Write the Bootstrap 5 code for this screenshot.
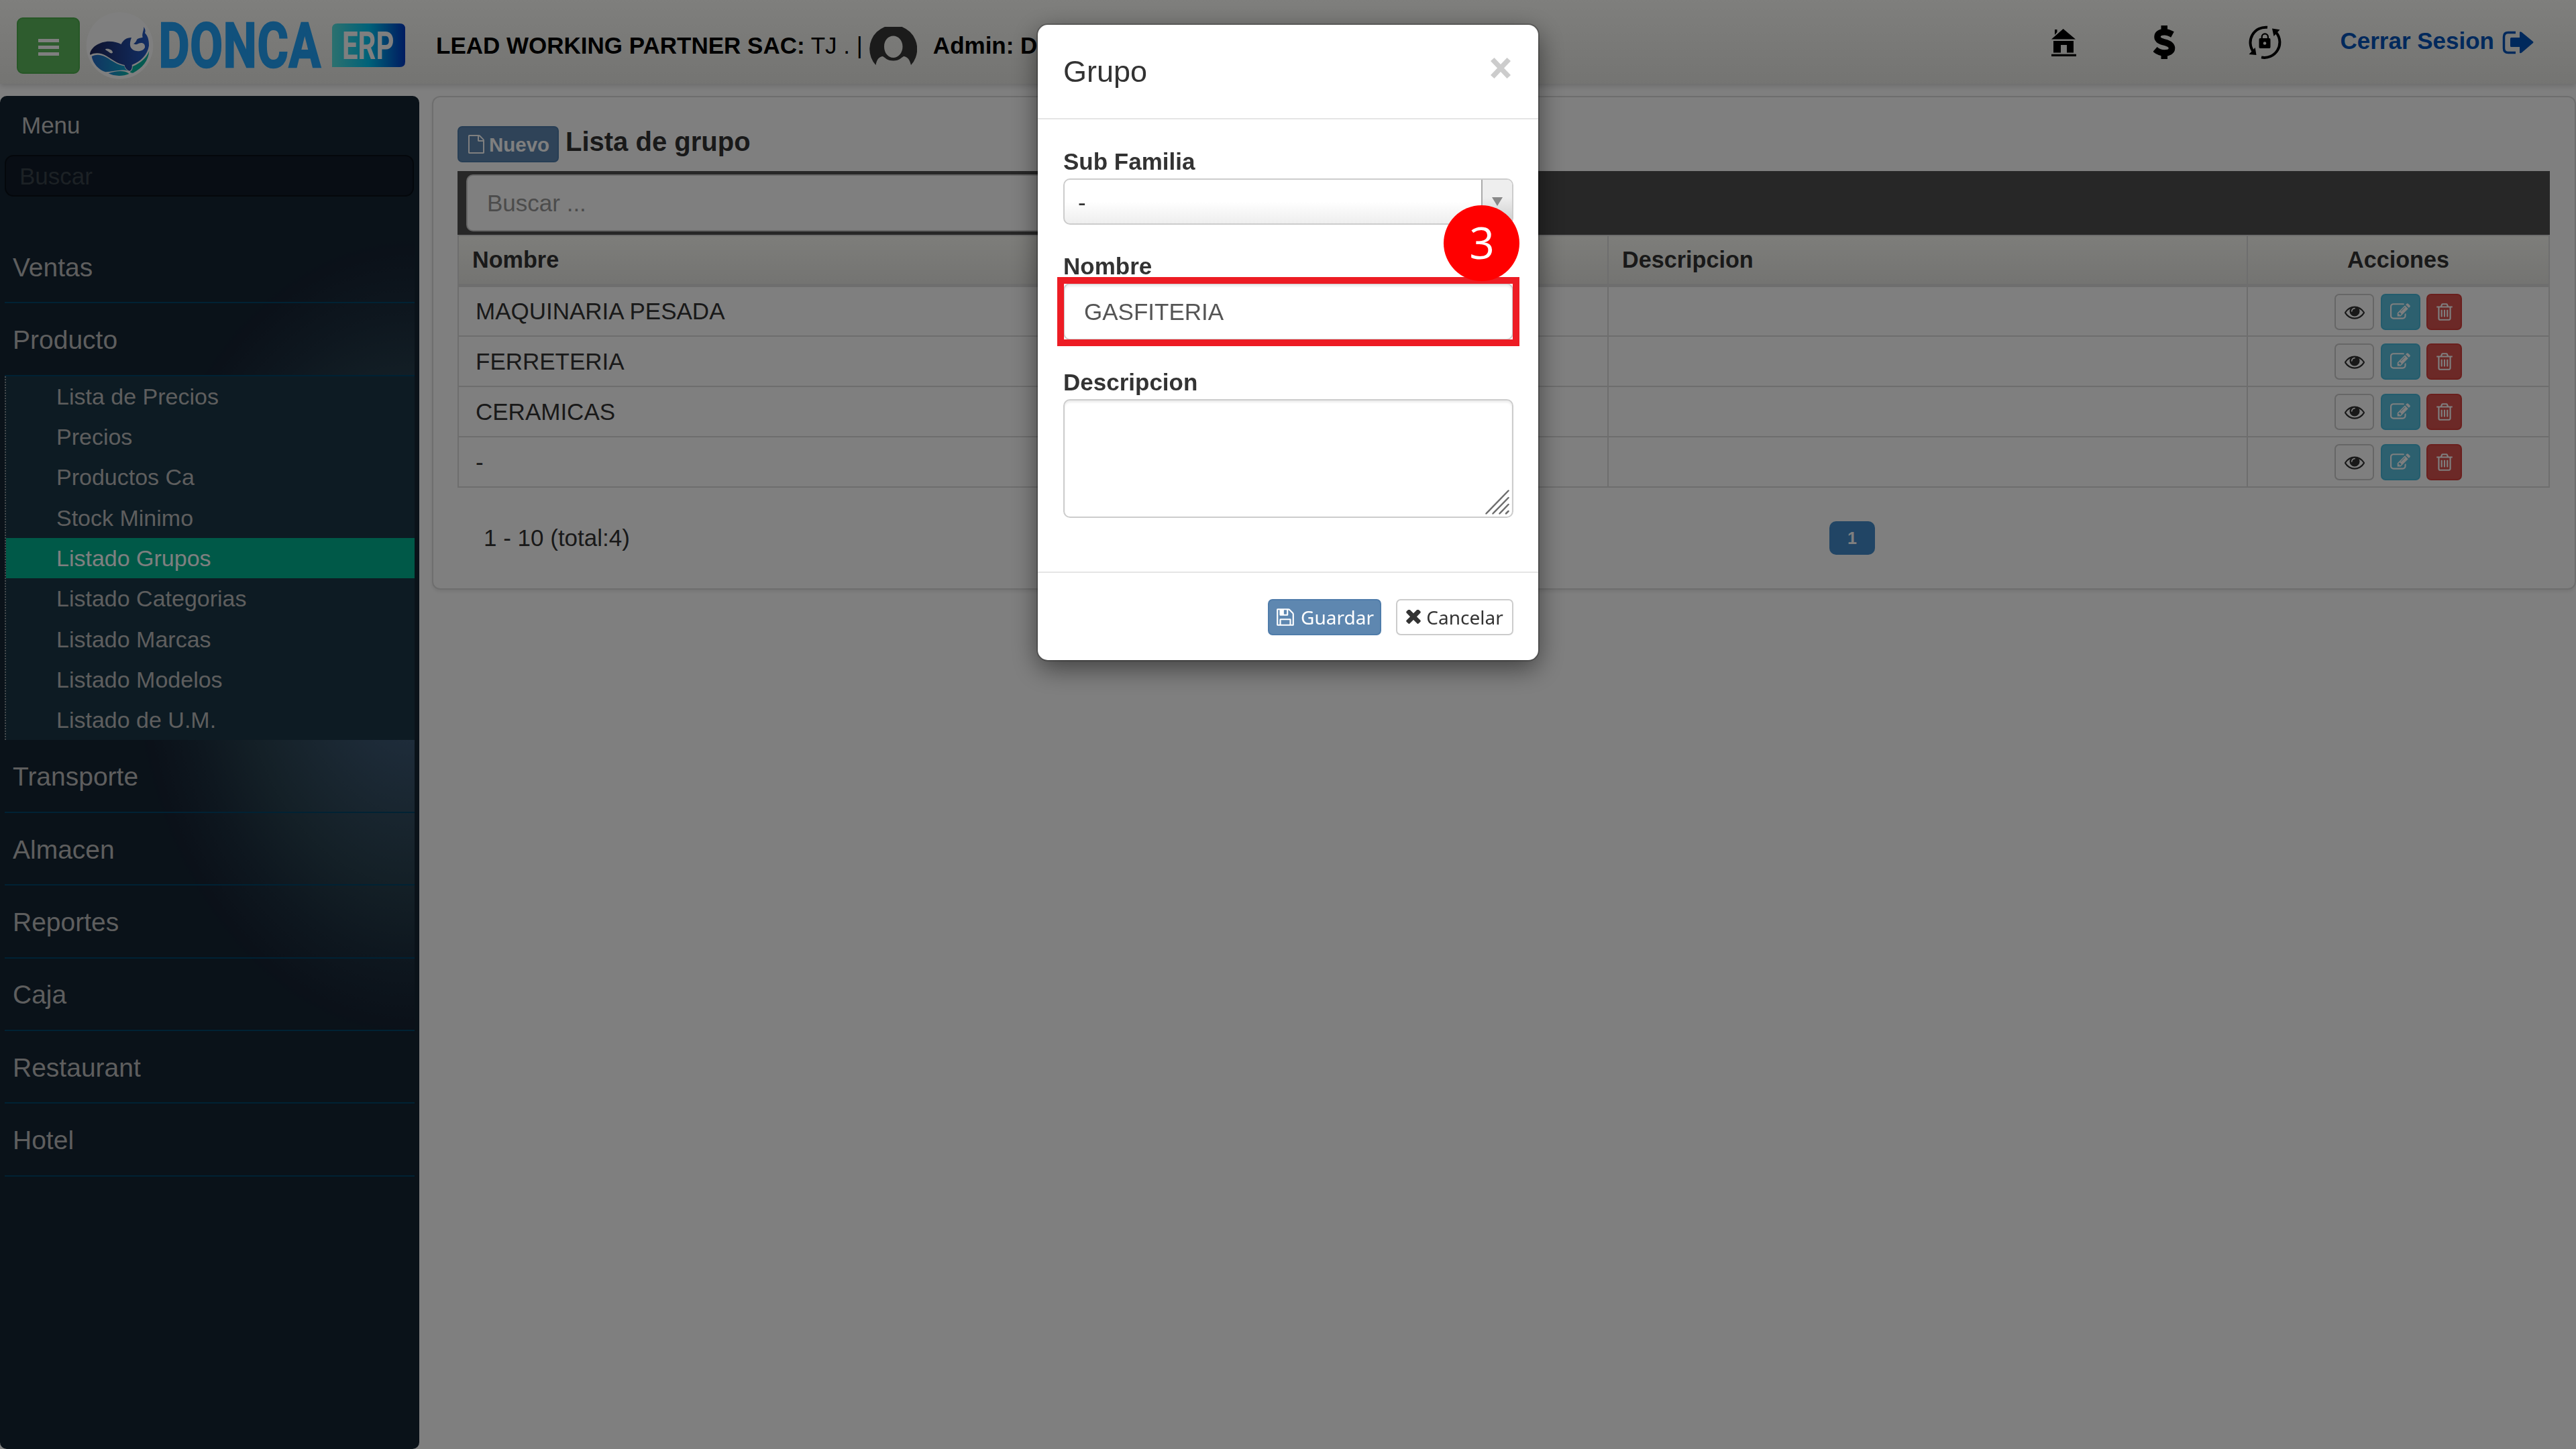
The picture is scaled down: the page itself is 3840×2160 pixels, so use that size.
<!DOCTYPE html>
<html lang="es">
<head>
<meta charset="utf-8">
<meta name="viewport" content="width=device-width, initial-scale=1">
<title>Donca ERP - Lista de grupo</title>
<link href="https://cdn.jsdelivr.net/npm/bootstrap@5.3.0/dist/css/bootstrap.min.css" rel="stylesheet">
<style>
  html, body { height: 2160px; overflow: hidden; }
  body { font-family: "Liberation Sans", Arial, sans-serif; font-size: 35px; line-height: 50px; color: #333; background: #fff; }
  svg { display: block; flex: none; }

  /* Top bar */
  .topbar { height: 125px; padding: 11px 63px 0 25px; color: #000; background: linear-gradient(#fefefa, #e9e9e5); box-shadow: 0 3px 8px rgba(0,0,0,.17); }
  .btn-menu { width: 94px; height: 84px; padding: 0; border: 2px solid #4cae4c; border-radius: 9px; background: #5cb85c; gap: 5px; }
  .btn-menu i { width: 31px; height: 5px; background: #fff; }
  .brand-logo { margin-left: 10px; overflow: visible; }
  .company { margin-left: 46px; white-space: pre; }
  .avatar-pic { margin: 0 24px 0 10px; }
  .quick { margin-bottom: 10px; }
  .logout { color: #0052b8; font-weight: 700; gap: 12px; text-decoration: none; }
  .logout span { margin-top: -5px; }

  /* Sidebar */
  .work { margin-top: 18px; height: 2017px; }
  .sidebar { width: 625px; padding: 19px 7px 0; border-radius: 10px; background: #142432; color: #bdbdbd; flex: none; }
  .side-title { padding-left: 25px; color: #c4c4c4; }
  .side-search { height: 62px; margin: 19px 1px 50px 0; padding: 1px 19px 0 20px; border: 2px solid #080e16; border-radius: 13px; background: #101a28; font-size: 35px; color: #bbb; width: 610px; }
  .side-search::placeholder { color: #38424a; opacity: 1; }
  .side-nav { background: radial-gradient(ellipse 420px 592px at 100% 607px, #4c6c8c 0, #3c5874 26%, #324c60 44%, #28404e 62%, #1c2e3e 81%, #162232 98%, #142432 100%); font-size: 39px; padding-top: 1px; }
  .side-item { height: 108.4px; padding: 3px 0 0 12px; border-bottom: 2px solid #004468; display: flex; align-items: center; }
  .side-sub { border-left: 2px dotted #8f979b; background: #1a3646; font-size: 34px; }
  .side-sub li { height: 60.3px; line-height: 60px; padding-left: 75px; }
  .side-sub li.on { background: #00b290; color: #fff; }

  /* Content panel */
  .panel-box { margin-left: 19px; height: 736px; padding: 41px 37px 0 36px; border: 2px solid #ddd; border-radius: 12px; box-shadow: 0 3px 5px rgba(0,0,0,.08); background: #fff; }
  .panel-head { height: 69px; gap: 10px; }
  .btn-act { height: 54px; padding: 0; border-radius: 7px; border-width: 2px; border-style: solid; display: flex; align-items: center; justify-content: center; }
  .c-primary { background: #5e87b0; border-color: #4f7caa; color: #fff; }
  .c-info { background: #5bc0de; border-color: #46b8da; color: #fff; width: 59px; }
  .c-danger { background: #d9534f; border-color: #d43f3a; color: #fff; width: 53px; }
  .c-plain { background: #fff; border-color: #ccc; color: #333; }
  .btn-new { width: 151px; margin-top: 2px; font-size: 29.5px; font-weight: 700; gap: 5px; }
  .btn-new span { padding-top: 2px; }
  .panel-title { font-size: 40px; font-weight: 700; line-height: 50px; margin: 0; }
  .toolbar { height: 95px; padding: 5px 13px; background: #4e4e4e; }
  .toolbar input { width: 1400px; height: 85px; padding: 0 29px; border: 2px solid #ccc; border-radius: 10px; font-size: 35px; }
  .toolbar input::placeholder { color: #999; opacity: 1; }
  .grid-table { table-layout: fixed; width: 3119px; border-collapse: separate; border-spacing: 0; margin: 0; color: #333; }
  .grid-table th, .grid-table td { border: 0 solid #ddd; border-right-width: 2px; border-bottom-width: 2px; padding: 0 0 0 25px; vertical-align: middle; height: 75px; box-shadow: none; }
  .grid-table th:first-child, .grid-table td:first-child { border-left-width: 2px; }
  .grid-table th { height: 78px; border-top-width: 2px; border-bottom-width: 5px; padding: 0 0 2px 20px; font-size: 34.2px; background: linear-gradient(#fbfbf5, #e8e8e4); }
  .grid-table tbody tr:first-child td { height: 74px; }
  .grid-table .acts { padding: 1px 0 0; text-align: center; }
  .pager-row { margin-top: 50px; padding-left: 39px; }
  .pager-row .total { width: 2006px; }
  .pager-on { width: 68px; height: 50px; border-radius: 10px; background: #428bca; color: #fff; font-size: 25px; font-weight: 700; text-align: center; }

  /* Modal */
  .modal-backdrop.show { width: 3840px; height: 2160px; opacity: .5; }
  .modal-dialog.dlg { width: 746px; max-width: none; margin: 37px auto 0; margin-left: 1547px; }
  .dlg .modal-content { height: 947px; border: 0; border-radius: 15px; box-shadow: 0 0 0 2px rgba(0,0,0,.2), 0 12px 38px rgba(0,0,0,.5); color: #333; }
  .dlg .modal-header { height: 141px; padding: 0 41px 0 38px; border-bottom: 2px solid #e5e5e5; }
  .dlg .modal-title { font-size: 45px; line-height: 60px; font-weight: 400; }
  .dlg .modal-body { padding: 38px 37px 0 38px; }
  .dlg label { font-weight: 700; display: block; line-height: 50px; }
  .sel { height: 69px; border: 2px solid #ccc; border-radius: 10px; background: linear-gradient(#fff 0, #fff 50%, #eee 100%); overflow: hidden; }
  .sel .val { padding: 2px 0 0 20px; }
  .sel .arr { width: 46px; border-left: 2px solid #aaa; background: linear-gradient(#eee 0, #eee 40%, #ccc 100%); padding-top: 26px; }
  .fld { border: 2px solid #ccc; border-radius: 10px; box-shadow: inset 0 3px 3px rgba(0,0,0,.075); color: #555; font-size: 35px; }
  .fld-name { height: 85px; padding: 0 29px; }
  .fld-area { height: 177px; padding: 0 4px 3px 0; }
  .red-frame { position: absolute; left: 29px; top: 376px; width: 689px; height: 103px; border: 10px solid #ed1c24; }
  .step-dot { position: absolute; left: 605px; top: 269px; width: 113px; height: 113px; border-radius: 50%; background: #f00; color: #fff; font: 66px/108px "Open Sans", "Noto Sans", sans-serif; text-align: center; padding-left: 1px; }
  .dlg .modal-footer { height: 132px; padding: 2px 37px 0 0; margin-top: auto; border-top: 2px solid #e5e5e5; gap: 22px; }
  .dlg .modal-footer .btn { margin: 0; font: 28px/40px "Noto Sans", sans-serif; }
</style>
<script src="https://cdn.jsdelivr.net/npm/bootstrap@5.3.0/dist/js/bootstrap.bundle.min.js"></script>
</head>
<body>
<svg width="0" height="0" class="position-absolute" aria-hidden="true">
  <symbol id="i-eye" viewBox="0 0 1792 1792"><path fill="currentColor" d="M1664 960q-152-236-381-353 61 104 61 225 0 185-131.5 316.5t-316.5 131.5-316.5-131.5-131.5-316.5q0-121 61-225-229 117-381 353 133 205 333.5 326.5t434.5 121.5 434.5-121.5 333.5-326.5zm-720-384q0-20-14-34t-34-14q-125 0-214.5 89.5t-89.5 214.5q0 20 14 34t34 14 34-14 14-34q0-86 61-147t147-61q20 0 34-14t14-34zm848 384q0 34-20 69-140 230-376.5 368.5t-499.5 138.5-499.5-139-376.5-368q-20-35-20-69t20-69q140-229 376.5-368t499.5-139 499.5 139 376.5 368q20 35 20 69z"/></symbol>
  <symbol id="i-edit" viewBox="0 0 1792 1792"><path fill="currentColor" d="M888 1184l116-116-152-152-116 116v56h96v96h56zm440-720q-16-16-33 1l-350 350q-17 17-1 33t33-1l350-350q17-17 1-33zm80 594v190q0 119-84.5 203.5t-203.5 84.5h-832q-119 0-203.5-84.5t-84.5-203.5v-832q0-119 84.5-203.5t203.5-84.5h832q63 0 117 25 15 7 18 23 3 17-9 29l-49 49q-14 14-32 8-23-6-45-6h-832q-66 0-113 47t-47 113v832q0 66 47 113t113 47h832q66 0 113-47t47-113v-126q0-13 9-22l64-64q15-15 35-7t20 29zm-96-738l288 288-672 672h-288v-288zm444 132l-92 92-288-288 92-92q28-28 68-28t68 28l152 152q28 28 28 68t-28 68z"/></symbol>
  <symbol id="i-trash" viewBox="0 0 1792 1792"><path fill="currentColor" d="M704 736v576q0 14-9 23t-23 9h-64q-14 0-23-9t-9-23v-576q0-14 9-23t23-9h64q14 0 23 9t9 23zm256 0v576q0 14-9 23t-23 9h-64q-14 0-23-9t-9-23v-576q0-14 9-23t23-9h64q14 0 23 9t9 23zm256 0v576q0 14-9 23t-23 9h-64q-14 0-23-9t-9-23v-576q0-14 9-23t23-9h64q14 0 23 9t9 23zm128 724v-948h-896v948q0 22 7 40.5t14.5 27 10.5 8.5h832q3 0 10.5-8.5t14.5-27 7-40.5zm-672-1076h448l-48-117q-7-9-17-11h-317q-10 2-17 11zm928 32v64q0 14-9 23t-23 9h-96v948q0 83-47 143.5t-113 60.5h-832q-66 0-113-58.5t-47-141.5v-952h-96q-14 0-23-9t-9-23v-64q0-14 9-23t23-9h309l70-167q15-37 54-63t79-26h320q40 0 79 26t54 63l70 167h309q14 0 23 9t9 23z"/></symbol>
</svg>

<header class="topbar d-flex align-items-center position-relative">
  <button class="btn-menu d-flex flex-column align-items-center justify-content-center pt-1" type="button" aria-label="Menu"><i></i><i></i><i></i></button>
  <svg class="brand-logo" width="475" height="100" viewBox="129 18 475 100">
    <defs>
      <linearGradient id="g-erp"><stop offset="0" stop-color="#58e2de"/><stop offset=".5" stop-color="#00c4f2"/><stop offset="1" stop-color="#0038c2"/></linearGradient>
      <linearGradient id="g-orca"><stop offset="0" stop-color="#1c2458"/><stop offset="1" stop-color="#245cc8"/></linearGradient>
      <linearGradient id="g-wave"><stop offset="0" stop-color="#2468c4"/><stop offset="1" stop-color="#10a8d0"/></linearGradient>
      <linearGradient id="g-sea"><stop offset="0" stop-color="#1e88d8"/><stop offset="1" stop-color="#0ab8a8"/></linearGradient>
    </defs>
    <circle cx="178.5" cy="68" r="49.8" fill="#fff"/>
    <g transform="translate(20 10) scale(.33333)">
      <path fill="url(#g-orca)" d="M342 212C345 182 385 155 428 155C450 155 468 160 482 168C490 150 505 138 528 138C522 152 520 168 523 178C532 205 578 205 588 182C590 166 578 158 560 164C552 169 545 170 537 166C545 160 550 155 552 147C560 138 572 140 578 137C573 120 584 108 583 90C591 102 591 110 588 118C600 128 607 150 606 175C600 215 570 245 530 260C532 275 527 284 520 287C509 285 499 275 497 261C465 256 440 235 415 220C390 205 365 205 345 215Z"/>
      <path fill="#fff" d="M411 190C425 185 443 194 444 204C442 212 431 207 426 202C420 197 412 196 411 190Z"/>
      <path fill="url(#g-wave)" d="M350 222C375 209 400 215 425 232C450 250 475 262 496 265C498 277 505 284 514 288C485 276 450 290 412 292C385 285 355 255 350 222Z"/>
      <path fill="#08b4a0" d="M533 267C570 252 598 225 607 198C604 240 577 275 535 296C527 297 520 292 521 291C528 287 534 280 533 267Z"/>
      <path fill="url(#g-sea)" d="M425 298C455 290 490 280 518 300C490 312 450 312 425 298Z"/>
    </g>
    <text transform="translate(236.5 100) scale(.757 1)" font-family="Roboto, sans-serif" font-weight="700" font-size="93.5" fill="#22a2f8" stroke="#22a2f8" stroke-width="2.5" letter-spacing="1">DONCA</text>
    <path fill="url(#g-erp)" d="M503 35H596Q604 35 604 43V92Q604 100 596 100H495V43Q495 35 503 35Z"/>
    <text transform="translate(510 88) scale(.73 1)" font-family="Roboto, sans-serif" font-weight="700" font-size="57.5" fill="#fff">ERP</text>
  </svg>
  <div class="company"><b>LEAD WORKING PARTNER SAC:</b> TJ . |</div>
  <svg class="avatar-pic" width="71" height="57" viewBox="0 0 71 57"><path fill="#363636" fill-rule="evenodd" d="M9.500 57A35.500 35.500 0 1 1 62 57C60 48 56 44.500 51 44C46 47 44 50.500 35.700 50.500C27 50.500 25 47 20 44C15 44.500 11 48 9.500 57ZM35.700 13.500C28 13.500 22 20 22 29.500C22 39 28 46 35.700 46C43 46 49.500 39 49.500 29.500C49.500 20 43 13.500 35.700 13.500Z"/></svg>
  <b>Admin: D</b>
  <div class="quick d-flex align-items-center ms-auto">
    <svg width="37" height="41" viewBox="0 0 37 41"><path d="M5 1H8.500V5L5 9ZM17.600 0L36 15.500H0ZM3 18H33V35.500H23V24H14V35.500H3ZM0 37.700H37V41H0Z"/></svg>
    <svg style="margin-left:115px" width="33" height="50" viewBox="0 0 33 50"><path d="M11.500 0H21V9H11.500ZM11.500 41H21V50H11.500Z"/><path fill="none" stroke="#000" stroke-width="9.500" d="M28.500 13.500C24 11 20 9.800 16.500 9.800C9.500 9.800 6 12.800 6 17C6 22 11 23.500 17 25.200C24 27 27.500 29.500 27.500 34C27.500 38.500 23 41 16.500 41C12 41 7 39.500 2.500 35.500"/></svg>
    <svg style="margin-left:108px" width="51" height="50" viewBox="0 0 51 50"><g fill="none" stroke="#000" stroke-width="4"><path d="M29 2.800A22.800 22.800 0 0 0 8 39"/><path d="M20 47.400A22.800 22.800 0 0 0 42.500 11"/></g><path d="M1.500 43L12.500 44L10.700 33ZM36 4.500L47.500 6.300L38.500 16ZM18 19H32Q33.500 19 33.500 21V32Q33.500 34 32 34H18Q16.500 34 16.500 32V21Q16.500 19 18 19Z"/><path fill="none" stroke="#000" stroke-width="2.200" d="M20.700 20V17A4.600 4.600 0 0 1 29.900 17V20"/><circle cx="25" cy="26.500" r="2.300" fill="#f2f2ee"/></svg>
    <a class="logout d-flex align-items-center" style="margin-left:86px" href="#"><span>Cerrar Sesion</span>
      <svg width="47" height="35" viewBox="0 0 47 35"><path fill="none" stroke="currentColor" stroke-width="3.500" d="M20 2.500H9Q2.500 2.500 2.500 9V26Q2.500 32.500 9 32.500H20"/><path fill="currentColor" d="M12 11.500Q12 10 13.500 10H26V2Q27 .5 29 2L46 16Q47 17 46 18L29 32.500Q27 34 26 32.500V24H13.500Q12 24 12 22.500Z"/></svg>
    </a>
  </div>
</header>

<div class="work d-flex align-items-start">
  <aside class="sidebar h-100">
    <div class="side-title">Menu</div>
    <input class="side-search d-block" type="text" placeholder="Buscar">
    <nav class="side-nav">
      <div class="side-item">Ventas</div>
      <div class="side-item">Producto</div>
      <ul class="side-sub list-unstyled m-0">
        <li>Lista de Precios</li>
        <li>Precios</li>
        <li>Productos Ca</li>
        <li>Stock Minimo</li>
        <li class="on">Listado Grupos</li>
        <li>Listado Categorias</li>
        <li>Listado Marcas</li>
        <li>Listado Modelos</li>
        <li>Listado de U.M.</li>
      </ul>
      <div class="side-item">Transporte</div>
      <div class="side-item">Almacen</div>
      <div class="side-item">Reportes</div>
      <div class="side-item">Caja</div>
      <div class="side-item">Restaurant</div>
      <div class="side-item">Hotel</div>
    </nav>
  </aside>

  <main class="panel-box flex-grow-1">
    <div class="panel-head d-flex align-items-start">
      <button class="btn-act btn-new c-primary" type="button">
        <svg width="28" height="28" viewBox="0 0 1792 1792"><path fill="#fff" d="M1596 380q28 28 48 76t20 88v1152q0 40-28 68t-68 28h-1344q-40 0-68-28t-28-68v-1600q0-40 28-68t68-28h896q40 0 88 20t76 48zm-444-244v376h376q-10-29-22-41l-313-313q-12-12-41-22zm384 1528v-1024h-416q-40 0-68-28t-28-68v-416h-768v1536h1280z"/></svg>
        <span>Nuevo</span>
      </button>
      <h1 class="panel-title">Lista de grupo</h1>
    </div>
    <div class="toolbar"><input type="text" placeholder="Buscar ..."></div>
    <table class="grid-table">
      <colgroup><col style="width:1716px"><col style="width:953px"><col style="width:450px"></colgroup>
      <thead><tr><th>Nombre</th><th>Descripcion</th><th class="text-center ps-0">Acciones</th></tr></thead>
      <tbody id="rows"></tbody>
    </table>
    <div class="pager-row d-flex">
      <div class="total">1 - 10 (total:4)</div>
      <div class="pager-on">1</div>
    </div>
  </main>
</div>

<div class="modal-backdrop show"></div>
<div class="modal d-block overflow-hidden" tabindex="-1">
  <div class="modal-dialog dlg">
    <div class="modal-content">
      <div class="modal-header d-flex justify-content-between">
        <h4 class="modal-title">Grupo</h4>
        <svg width="30" height="31" viewBox="0 0 30 31" style="margin-bottom:11px"><path fill="#ccc" d="M0 5L5.500 0L15 10L24.500 0L30 5L20 15.500L30 26L24.500 31L15 21L5.500 31L0 26L10 15.500Z"/></svg>
      </div>
      <div class="modal-body">
        <label>Sub Familia</label>
        <div class="sel d-flex justify-content-between">
          <div class="val d-flex align-items-center">-</div>
          <div class="arr d-flex justify-content-center"><svg width="16" height="13" viewBox="0 0 16 13"><path fill="#888" d="M0 0H16L8 13Z"/></svg></div>
        </div>
        <label style="margin-top:37px">Nombre</label>
        <input class="fld fld-name w-100 d-block" type="text" value="GASFITERIA">
        <label style="margin-top:38px">Descripcion</label>
        <div class="fld fld-area d-flex justify-content-end align-items-end">
          <svg width="36" height="37" viewBox="0 0 36 37"><g stroke="#6e6e6e" stroke-width="2.500" stroke-linecap="round"><path d="M1.500 35.500L34.500 1.500M11.500 35.500L34.500 12M21.500 35.500L34.500 22M31 35.500L34.500 32"/></g></svg>
        </div>
      </div>
      <div class="modal-footer d-flex flex-nowrap align-items-center justify-content-end">
        <button type="button" class="btn btn-act c-primary" style="width:169px;gap:8px">
          <svg width="30" height="30" viewBox="0 0 1792 1792"><path fill="#fff" d="M512 1536h768v-384h-768v384zm896 0h128v-896q0-14-10-38.500t-20-34.500l-281-281q-10-10-34-20t-39-10v416q0 40-28 68t-68 28h-576q-40 0-68-28t-28-68v-416h-128v1280h128v-416q0-40 28-68t68-28h832q40 0 68 28t28 68v416zm-384-928v-320q0-13-9.500-22.500t-22.500-9.500h-192q-13 0-22.500 9.500t-9.500 22.500v320q0 13 9.500 22.500t22.500 9.500h192q13 0 22.500-9.500t9.500-22.500zm640 32v928q0 40-28 68t-68 28h-1344q-40 0-68-28t-28-68v-1344q0-40 28-68t68-28h928q40 0 88 20t76 48l280 280q28 28 48 76t20 88z"/></svg>
          <span>Guardar</span>
        </button>
        <button type="button" class="btn btn-act c-plain" style="width:175px;gap:8px">
          <svg width="22" height="22" viewBox="288 400 1216 1216"><path fill="#333" d="M1490 1322q0 40-28 68l-136 136q-28 28-68 28t-68-28l-294-294-294 294q-28 28-68 28t-68-28l-136-136q-28-28-28-68t28-68l294-294-294-294q-28-28-28-68t28-68l136-136q28-28 68-28t68 28l294 294 294-294q28-28 68-28t68 28l136 136q28 28 28 68t-28 68l-294 294 294 294q28 28 28 68z"/></svg>
          <span>Cancelar</span>
        </button>
      </div>
      <div class="red-frame"></div>
      <div class="step-dot">3</div>
    </div>
  </div>
</div>

<script>
  // One table row per product group, each with view, edit and delete buttons
  const icon = (id) => `<svg width="30" height="30"><use href="#${id}"/></svg>`;
  document.getElementById('rows').innerHTML = ['MAQUINARIA PESADA', 'FERRETERIA', 'CERAMICAS', '-'].map(n => `
    <tr><td>${n}</td><td></td><td class="acts">
      <div class="d-flex justify-content-center" style="gap:9.500px">
        <button class="btn-act c-plain" style="width:59px" type="button">${icon('i-eye')}</button>
        <button class="btn-act c-info" type="button">${icon('i-edit')}</button>
        <button class="btn-act c-danger" type="button">${icon('i-trash')}</button>
      </div></td></tr>`).join('');
</script>
</body>
</html>
